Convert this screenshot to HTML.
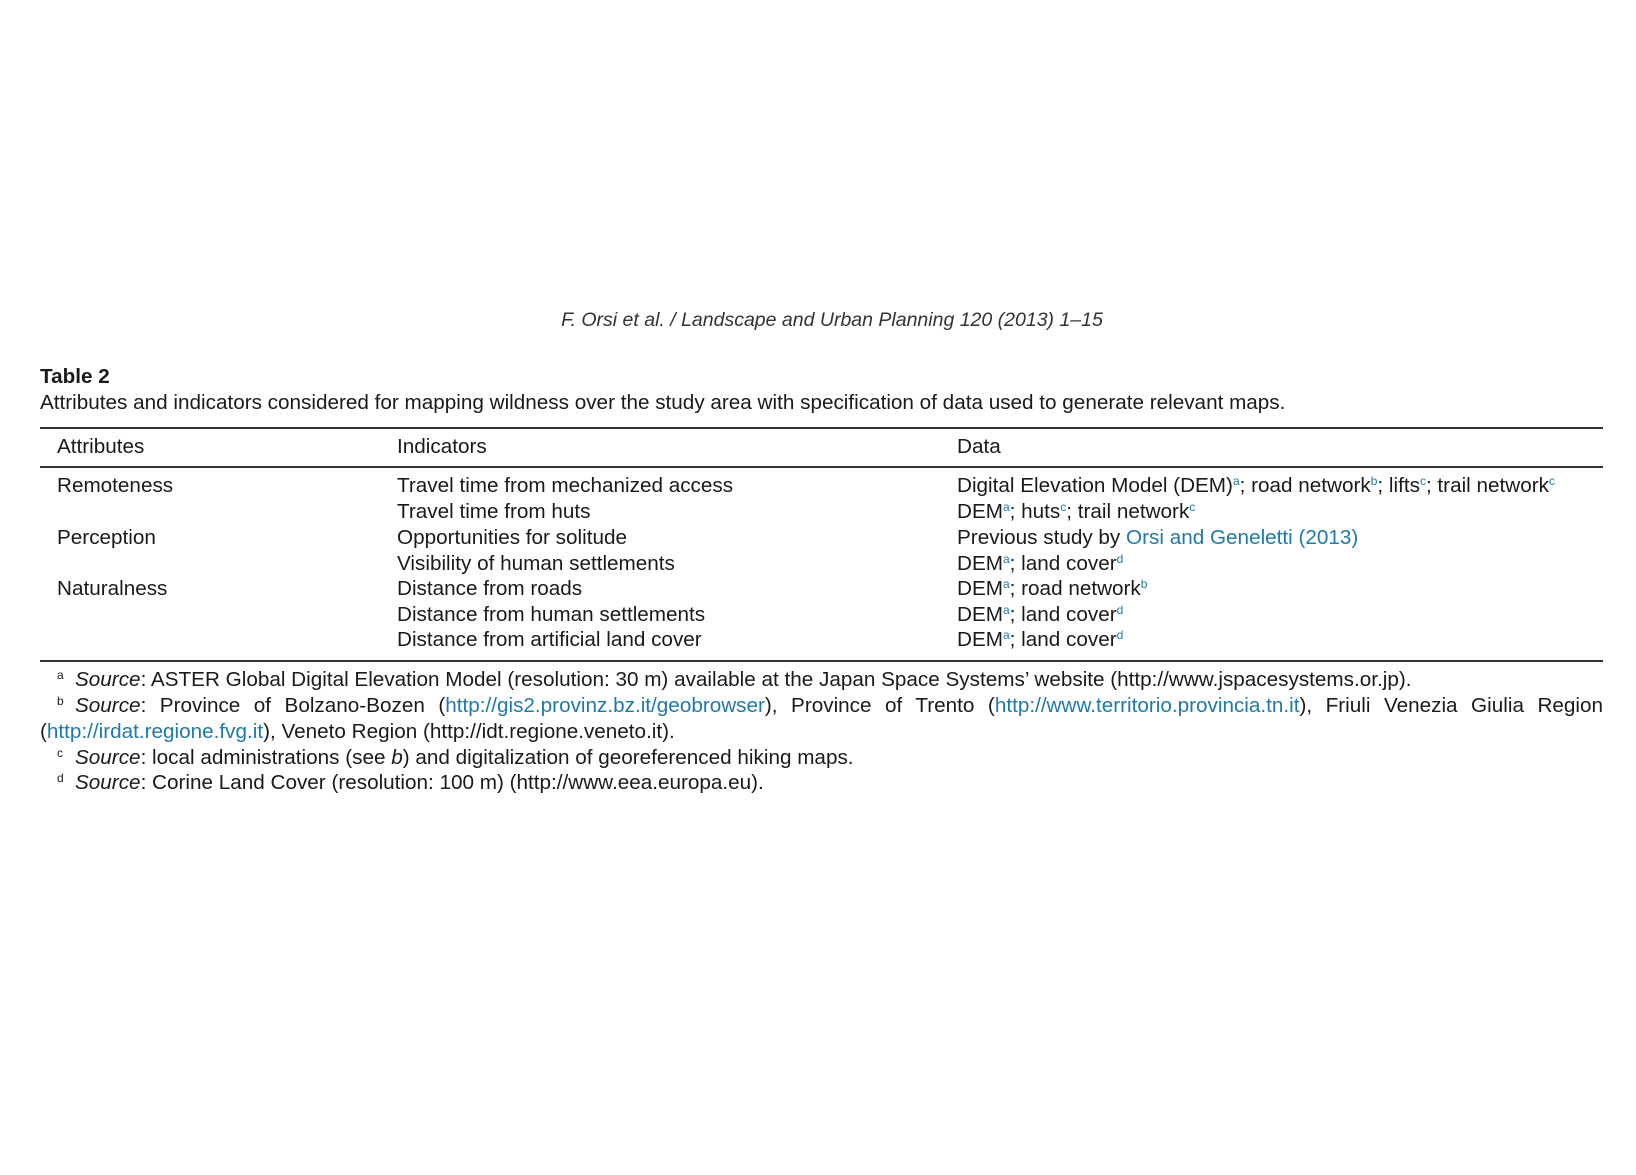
<!DOCTYPE html>
<html><head><meta charset="utf-8"><style>
html,body{margin:0;padding:0;background:#fff;}
body{width:1636px;height:1175px;position:relative;font-family:"Liberation Sans",sans-serif;color:#1a1a1a;font-size:20.7px;}
.l{position:absolute;line-height:26px;white-space:nowrap;}
.a{color:#1f7aa8;}
sup{font-size:12px;line-height:0;vertical-align:7px;}
.rule{position:absolute;left:40px;width:1563px;height:1.5px;background:#333;}
i{font-style:italic;}
.fn{display:inline-block;width:18px;text-indent:0;}
</style></head><body>
<div class="l" style="top:307px;left:14px;width:1636px;text-align:center;font-style:italic;font-size:19.5px;color:#333;">F. Orsi et al. / Landscape and Urban Planning 120 (2013) 1–15</div>
<div class="l" style="top:364px;left:40px;font-weight:bold;">Table 2</div>
<div class="l" style="top:390px;left:40px;">Attributes and indicators considered for mapping wildness over the study area with specification of data used to generate relevant maps.</div>
<div class="rule" style="top:427px;"></div>
<div class="l" style="top:434px;left:57px;">Attributes</div>
<div class="l" style="top:434px;left:397px;">Indicators</div>
<div class="l" style="top:434px;left:957px;">Data</div>
<div class="rule" style="top:466px;"></div>

<div class="l" style="top:473px;left:57px;">Remoteness</div>
<div class="l" style="top:473px;left:397px;">Travel time from mechanized access</div>
<div class="l" style="top:473px;left:957px;">Digital Elevation Model (DEM)<sup class="a">a</sup>; road network<sup class="a">b</sup>; lifts<sup class="a">c</sup>; trail network<sup class="a">c</sup></div>
<div class="l" style="top:499px;left:397px;">Travel time from huts</div>
<div class="l" style="top:499px;left:957px;">DEM<sup class="a">a</sup>; huts<sup class="a">c</sup>; trail network<sup class="a">c</sup></div>
<div class="l" style="top:525px;left:57px;">Perception</div>
<div class="l" style="top:525px;left:397px;">Opportunities for solitude</div>
<div class="l" style="top:525px;left:957px;">Previous study by <span class="a">Orsi and Geneletti (2013)</span></div>
<div class="l" style="top:551px;left:397px;">Visibility of human settlements</div>
<div class="l" style="top:551px;left:957px;">DEM<sup class="a">a</sup>; land cover<sup class="a">d</sup></div>
<div class="l" style="top:576px;left:57px;">Naturalness</div>
<div class="l" style="top:576px;left:397px;">Distance from roads</div>
<div class="l" style="top:576px;left:957px;">DEM<sup class="a">a</sup>; road network<sup class="a">b</sup></div>
<div class="l" style="top:602px;left:397px;">Distance from human settlements</div>
<div class="l" style="top:602px;left:957px;">DEM<sup class="a">a</sup>; land cover<sup class="a">d</sup></div>
<div class="l" style="top:627px;left:397px;">Distance from artificial land cover</div>
<div class="l" style="top:627px;left:957px;">DEM<sup class="a">a</sup>; land cover<sup class="a">d</sup></div>
<div class="rule" style="top:660px;"></div>

<div class="l" style="top:667px;left:57px;"><span class="fn"><sup>a</sup></span><i>Source</i>: ASTER Global Digital Elevation Model (resolution: 30 m) available at the Japan Space Systems’ website (http://www.jspacesystems.or.jp).</div>
<div style="position:absolute;top:693px;left:40px;width:1563px;line-height:26px;text-align:justify;text-align-last:left;text-indent:17px;"><span class="fn"><sup>b</sup></span><i>Source</i>: Province of Bolzano-Bozen (<span class="a">http://gis2.provinz.bz.it/geobrowser</span>), Province of Trento (<span class="a">http://www.territorio.provincia.tn.it</span>), Friuli Venezia Giulia Region (<span class="a">http://irdat.regione.fvg.it</span>), Veneto Region (http://idt.regione.veneto.it).</div>
<div class="l" style="top:745px;left:57px;"><span class="fn"><sup>c</sup></span><i>Source</i>: local administrations (see <i>b</i>) and digitalization of georeferenced hiking maps.</div>
<div class="l" style="top:770px;left:57px;"><span class="fn"><sup>d</sup></span><i>Source</i>: Corine Land Cover (resolution: 100 m) (http://www.eea.europa.eu).</div>
</body></html>
